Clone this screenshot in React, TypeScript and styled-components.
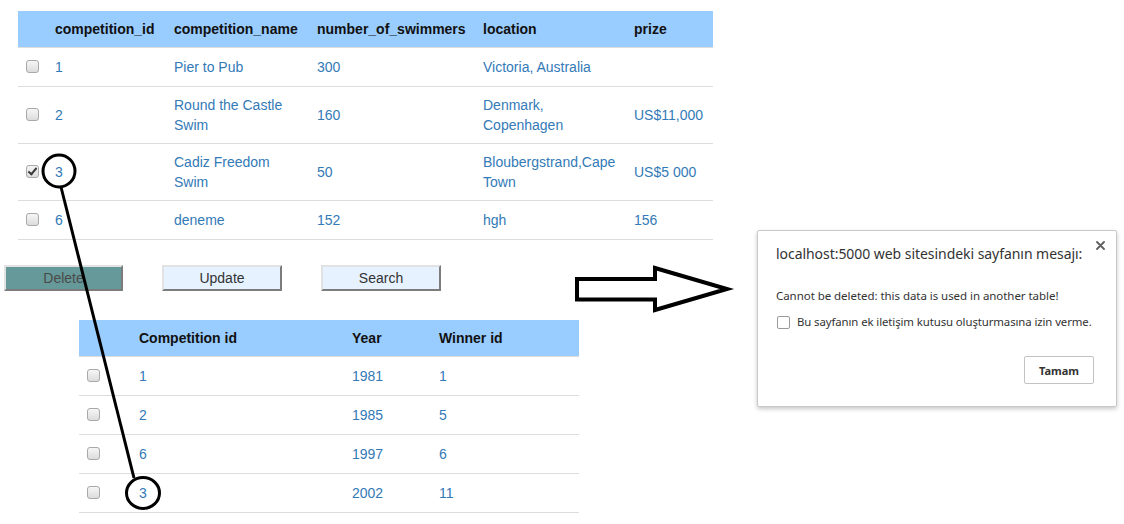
import React from "react";
import styled, { createGlobalStyle } from "styled-components";

const GlobalStyle = createGlobalStyle`
  html, body { margin: 0; padding: 0; background: #fff; }
  body {
    width: 1124px;
    height: 524px;
    overflow: hidden;
    font-family: "Liberation Sans", Arial, sans-serif;
    font-size: 14px;
    color: #333;
  }
`;

const Page = styled.div`
  position: relative;
  display: flex;
  width: 1124px;
  height: 524px;
`;

const Main = styled.div`
  flex: none;
  width: 757px;
  display: flex;
  flex-direction: column;
  align-items: flex-start;
  padding-top: 11px;
  box-sizing: border-box;
`;

const Table = styled.table<{ $width: number; $left: number }>`
  border-collapse: collapse;
  table-layout: fixed;
  width: ${(p) => p.$width}px;
  margin-left: ${(p) => p.$left}px;
`;

const Th = styled.th`
  background: #99ccff;
  text-align: left;
  font-weight: bold;
  color: #111;
  padding: 8px;
  line-height: 20px;
  border-bottom: 1px solid #ddd;
  white-space: nowrap;
`;

const Td = styled.td`
  padding: 8px;
  line-height: 20px;
  vertical-align: middle;
  border-bottom: 1px solid #ddd;
  color: #337ab7;
`;

const RowCheck = styled.input.attrs({ type: "checkbox" })`
  appearance: none;
  -webkit-appearance: none;
  display: block;
  position: relative;
  width: 13px;
  height: 13px;
  margin: 4px 0 5px;
  box-sizing: border-box;
  border: 1px solid #a9a9a9;
  border-radius: 3px;
  background: linear-gradient(#f6f6f6, #dcdcdc);

  &:checked::after {
    content: "";
    position: absolute;
    left: 3px;
    top: 0px;
    width: 3px;
    height: 7px;
    border: solid #3a3a3a;
    border-width: 0 2px 2px 0;
    transform: rotate(40deg);
  }
`;

const ButtonRow = styled.div`
  display: flex;
  gap: 39px;
  margin: 25px 0 0 4px;
`;

const ActionButton = styled.button<{ $danger?: boolean }>`
  width: ${(p) => (p.$danger ? 119 : 120)}px;
  height: 26px;
  box-sizing: border-box;
  padding: 0;
  border: 2px solid;
  border-color: #e2e2e2 #7c7c7c #7c7c7c #e2e2e2;
  background: ${(p) => (p.$danger ? "#669999" : "#e6f2ff")};
  color: ${(p) => (p.$danger ? "#4a4a4a" : "#333")};
  font-family: "Liberation Sans", Arial, sans-serif;
  font-size: 14px;
`;

const SecondTableWrap = styled.div`
  margin-top: 29px;
`;

const Dialog = styled.div`
  position: relative;
  flex: none;
  margin-top: 230px;
  width: 360px;
  height: 177px;
  box-sizing: border-box;
  border: 1px solid #c9c9c9;
  border-radius: 2px;
  box-shadow: 0 2px 4px rgba(0, 0, 0, 0.22);
  background: #fff;
  display: flex;
  flex-direction: column;
  align-items: flex-start;
  padding: 13px 22px 22px 18px;
  font-family: "Noto Sans", "Open Sans", sans-serif;
  color: #333;
`;

const DialogTitle = styled.div`
  font-size: 14px;
  line-height: 20px;
  letter-spacing: -0.05px;
  color: #333;
`;

const DialogMessage = styled.div`
  margin-top: 24px;
  font-size: 11.5px;
  line-height: 16px;
  letter-spacing: -0.05px;
`;

const DialogOption = styled.label`
  margin-top: 10px;
  display: flex;
  align-items: center;
  gap: 7px;
  font-size: 11.4px;
  line-height: 16px;
  letter-spacing: -0.1px;
  white-space: nowrap;
`;

const DialogCheck = styled.input.attrs({ type: "checkbox" })`
  appearance: none;
  -webkit-appearance: none;
  flex: none;
  width: 13px;
  height: 13px;
  margin: 0 0 0 1px;
  box-sizing: border-box;
  border: 1px solid #9a9a9a;
  border-radius: 2px;
  background: #fff;
`;

const DialogFooter = styled.div`
  margin-top: auto;
  align-self: stretch;
  display: flex;
  justify-content: flex-end;
`;

const OkButton = styled.button`
  width: 70px;
  height: 28px;
  box-sizing: border-box;
  border: 1px solid #c3c3c3;
  border-radius: 2px;
  background: #fff;
  font-family: "Noto Sans", "Open Sans", sans-serif;
  font-size: 11px;
  font-weight: bold;
  color: #333;
  padding: 0;
`;

const CloseButton = styled.button`
  position: absolute;
  top: 9px;
  right: 10px;
  width: 11px;
  height: 11px;
  padding: 0;
  border: 0;
  background: none;
  display: flex;
  align-items: center;
  justify-content: center;
`;

const Overlay = styled.svg`
  position: absolute;
  left: 0;
  top: 0;
  pointer-events: none;
`;

type Comp = { id: string; name: string; swimmers: string; location: string; prize: string; checked?: boolean };

const competitions: Comp[] = [
  { id: "1", name: "Pier to Pub", swimmers: "300", location: "Victoria, Australia", prize: "" },
  { id: "2", name: "Round the Castle Swim", swimmers: "160", location: "Denmark, Copenhagen", prize: "US$11,000" },
  { id: "3", name: "Cadiz Freedom Swim", swimmers: "50", location: "Bloubergstrand,Cape Town", prize: "US$5 000", checked: true },
  { id: "6", name: "deneme", swimmers: "152", location: "hgh", prize: "156" },
];

const winners = [
  { id: "1", year: "1981", winner: "1" },
  { id: "2", year: "1985", winner: "5" },
  { id: "6", year: "1997", winner: "6" },
  { id: "3", year: "2002", winner: "11" },
];

export default function App() {
  return (
    <>
      <GlobalStyle />
      <Page>
        <Main>
          <Table $width={695} $left={18}>
            <colgroup>
              <col style={{ width: 29 }} />
              <col style={{ width: 119 }} />
              <col style={{ width: 143 }} />
              <col style={{ width: 166 }} />
              <col style={{ width: 151 }} />
              <col style={{ width: 87 }} />
            </colgroup>
            <thead>
              <tr>
                <Th />
                <Th>competition_id</Th>
                <Th>competition_name</Th>
                <Th>number_of_swimmers</Th>
                <Th>location</Th>
                <Th>prize</Th>
              </tr>
            </thead>
            <tbody>
              {competitions.map((c) => (
                <tr key={c.id}>
                  <Td>
                    <RowCheck defaultChecked={c.checked} />
                  </Td>
                  <Td>{c.id}</Td>
                  <Td>{c.name}</Td>
                  <Td>{c.swimmers}</Td>
                  <Td>{c.location}</Td>
                  <Td>{c.prize}</Td>
                </tr>
              ))}
            </tbody>
          </Table>

          <ButtonRow>
            <ActionButton $danger>Delete</ActionButton>
            <ActionButton>Update</ActionButton>
            <ActionButton>Search</ActionButton>
          </ButtonRow>

          <SecondTableWrap>
            <Table $width={500} $left={79}>
              <colgroup>
                <col style={{ width: 52 }} />
                <col style={{ width: 213 }} />
                <col style={{ width: 87 }} />
                <col style={{ width: 148 }} />
              </colgroup>
              <thead>
                <tr>
                  <Th />
                  <Th>Competition id</Th>
                  <Th>Year</Th>
                  <Th>Winner id</Th>
                </tr>
              </thead>
              <tbody>
                {winners.map((w) => (
                  <tr key={w.id}>
                    <Td>
                      <RowCheck />
                    </Td>
                    <Td>{w.id}</Td>
                    <Td>{w.year}</Td>
                    <Td>{w.winner}</Td>
                  </tr>
                ))}
              </tbody>
            </Table>
          </SecondTableWrap>
        </Main>

        <Dialog>
          <CloseButton aria-label="Kapat">
            <svg width="9" height="9" viewBox="0 0 9 9">
              <path d="M1 1 L8 8 M8 1 L1 8" stroke="#5f5f5f" strokeWidth="1.8" strokeLinecap="round" />
            </svg>
          </CloseButton>
          <DialogTitle>localhost:5000 web sitesindeki sayfanın mesajı:</DialogTitle>
          <DialogMessage>Cannot be deleted: this data is used in another table!</DialogMessage>
          <DialogOption>
            <DialogCheck />
            Bu sayfanın ek iletişim kutusu oluşturmasına izin verme.
          </DialogOption>
          <DialogFooter>
            <OkButton>Tamam</OkButton>
          </DialogFooter>
        </Dialog>

        <Overlay width="1124" height="524" viewBox="0 0 1124 524">
          <ellipse cx="59" cy="171" rx="16" ry="16" fill="none" stroke="#000" strokeWidth="3" />
          <ellipse cx="143" cy="493" rx="16.5" ry="15.5" fill="none" stroke="#000" strokeWidth="3" />
          <line x1="61" y1="187" x2="134" y2="478" stroke="#000" strokeWidth="3" />
          <polygon
            points="577,279 655,279 655,268 727,289 655,310 655,299.5 577,299.5"
            fill="none"
            stroke="#000"
            strokeWidth="4"
            strokeLinejoin="miter"
          />
        </Overlay>
      </Page>
    </>
  );
}
